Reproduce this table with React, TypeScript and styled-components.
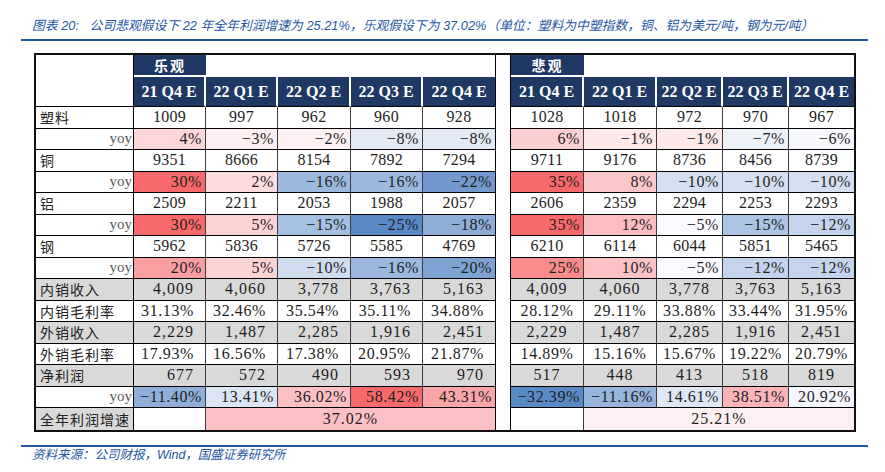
import React from "react";
import styled, {createGlobalStyle} from "styled-components";

const GlobalStyle = createGlobalStyle`
  body {
    margin: 0;
    background: #fff;
  }
`

const NAVY = '#203864'
const BLUE = '#2457a3'
const GRAY = '#d9d9d9'

type Kind = 'price' | 'yoy' | 'gray' | 'rate'
type Val = string | [string, string]

type RowType = {
  label: string,
  kind: Kind,
  left: Val[],
  right: Val[],
}

const rows: RowType[] = [
  {label: '塑料', kind: 'price', left: ['1009', '997', '962', '960', '928'], right: ['1028', '1018', '972', '970', '967']},
  {
    label: 'yoy', kind: 'yoy',
    left: [['4%', '#fcd6d8'], ['-3%', '#fdeff1'], ['-2%', '#fdf1f3'], ['-8%', '#e3eaf5'], ['-8%', '#e3eaf5']],
    right: [['6%', '#fbd0d2'], ['-1%', '#fde8ea'], ['-1%', '#fde8ea'], ['-7%', '#edf2f9'], ['-6%', '#f6f8fc']],
  },
  {label: '铜', kind: 'price', left: ['9351', '8666', '8154', '7892', '7294'], right: ['9711', '9176', '8736', '8456', '8739']},
  {
    label: 'yoy', kind: 'yoy',
    left: [['30%', '#f8696b'], ['2%', '#fcdcde'], ['-16%', '#9db8de'], ['-16%', '#9db8de'], ['-22%', '#7398cd']],
    right: [['35%', '#f8696b'], ['8%', '#fbc8ca'], ['-10%', '#d4e0f0'], ['-10%', '#d4e0f0'], ['-10%', '#d4e0f0']],
  },
  {label: '铝', kind: 'price', left: ['2509', '2211', '2053', '1988', '2057'], right: ['2606', '2359', '2294', '2253', '2293']},
  {
    label: 'yoy', kind: 'yoy',
    left: [['30%', '#f8696b'], ['5%', '#fcd3d5'], ['-15%', '#a6c0e2'], ['-25%', '#5a8ac6'], ['-18%', '#8dadd8']],
    right: [['35%', '#f8696b'], ['12%', '#fbbdbf'], ['-5%', '#fafbfe'], ['-15%', '#aec4e4'], ['-12%', '#c3d4ec']],
  },
  {label: '钢', kind: 'price', left: ['5962', '5836', '5726', '5585', '4769'], right: ['6210', '6114', '6044', '5851', '5465']},
  {
    label: 'yoy', kind: 'yoy',
    left: [['20%', '#f99fa1'], ['5%', '#fcd3d5'], ['-10%', '#d0ddef'], ['-16%', '#9db8de'], ['-20%', '#7ea2d2']],
    right: [['25%', '#f98b8d'], ['10%', '#fbc3c5'], ['-5%', '#fafbfe'], ['-12%', '#c3d4ec'], ['-12%', '#c3d4ec']],
  },
  {label: '内销收入', kind: 'gray', left: ['4,009', '4,060', '3,778', '3,763', '5,163'], right: ['4,009', '4,060', '3,778', '3,763', '5,163']},
  {label: '内销毛利率', kind: 'rate', left: ['31.13%', '32.46%', '35.54%', '35.11%', '34.88%'], right: ['28.12%', '29.11%', '33.88%', '33.44%', '31.95%']},
  {label: '外销收入', kind: 'gray', left: ['2,229', '1,487', '2,285', '1,916', '2,451'], right: ['2,229', '1,487', '2,285', '1,916', '2,451']},
  {label: '外销毛利率', kind: 'rate', left: ['17.93%', '16.56%', '17.38%', '20.95%', '21.87%'], right: ['14.89%', '15.16%', '15.67%', '19.22%', '20.79%']},
  {label: '净利润', kind: 'gray', left: ['677', '572', '490', '593', '970'], right: ['517', '448', '413', '518', '819']},
  {
    label: 'yoy', kind: 'yoy',
    left: [['-11.40%', '#8fafd9'], ['13.41%', '#dbe5f3'], ['36.02%', '#fbc0c2'], ['58.42%', '#f8696b'], ['43.31%', '#faa5a7']],
    right: [['-32.39%', '#5a8ac6'], ['-11.16%', '#97b4dc'], ['14.61%', '#dfe7f4'], ['38.51%', '#fbb5b8'], ['20.92%', '#f5f7fc']],
  },
]

const quarters = ['21 Q4 E', '22 Q1 E', '22 Q2 E', '22 Q3 E', '22 Q4 E']
const leftWidths = [72, 72, 73, 72, 72]
const rightWidths = [73, 73, 66, 66, 65]

const Page = styled.div`
  width: 847px;
  padding: 18px 0 0 21px;
`

const Caption = styled.div`
  height: 21px;
  padding-left: 11px;
  border-bottom: 2px solid ${BLUE};
  color: ${BLUE};
  font-family: "Liberation Sans", "Noto Sans CJK SC", sans-serif;
  font-style: italic;
  font-size: 12.8px;
  line-height: 16px;
  white-space: pre;
`

const Frame = styled.table`
  margin: 12px 0 0 13px;
  width: 822px;
  table-layout: fixed;
  border-collapse: separate;
  border-spacing: 0;
  border: 2px solid #111;
  font-family: "Liberation Serif", "Noto Sans CJK SC", serif;
  color: #1e1e1e;
`

const Row = styled.tr<{ $h: number }>`
  height: ${props => props.$h}px;
`

const Corner = styled.td`
  background: #fff;
  border-right: 1px solid #000;
  border-bottom: 1px solid #000;
`

const GroupHead = styled.td`
  background: ${NAVY};
  color: #fff;
  border-bottom: 2px solid #fff;
  text-align: center;
  font-family: "Noto Sans CJK SC", sans-serif;
  font-weight: 700;
  font-size: 14px;
  letter-spacing: 2px;
  padding: 0;
`

const Blank = styled.td`
  background: #fff;
  padding: 0;
`

const Gap = styled.td`
  background: #fff;
  border-left: 1px solid #000;
  border-right: 1px solid #000;
  padding: 0;
`

const QuarterHead = styled.td<{ $edge?: boolean }>`
  background: ${NAVY};
  color: #fff;
  border-right: ${props => props.$edge ? 'none' : '2px solid #fff'};
  border-bottom: 1px solid #000;
  text-align: center;
  font-weight: 700;
  font-size: 16px;
  padding: 0;
  white-space: nowrap;
`

const Label = styled.td<{ $gray: boolean, $yoy: boolean, $last?: boolean }>`
  background: ${props => props.$gray ? GRAY : '#fff'};
  border-right: 1px solid #000;
  border-bottom: ${props => props.$last ? 'none' : '1px solid #000'};
  padding: ${props => props.$yoy ? '0 1px 0 0' : '0 0 0 4px'};
  text-align: ${props => props.$yoy ? 'right' : 'left'};
  font-family: ${props => props.$yoy ? '"Liberation Serif", serif' : '"Noto Sans CJK SC", sans-serif'};
  font-size: ${props => props.$yoy ? '15px' : '14px'};
  letter-spacing: ${props => props.$yoy ? '0' : '1px'};
  color: ${props => props.$yoy ? '#595959' : '#222'};
  white-space: nowrap;
  overflow: hidden;
`

const Num = styled.td<{ $bg: string, $align: string, $pad: number, $edge?: boolean, $last?: boolean, $spacing: number }>`
  background: ${props => props.$bg};
  border-right: ${props => props.$edge ? 'none' : '1px solid #3c3c3c'};
  border-bottom: ${props => props.$last ? 'none' : '1px solid #000'};
  text-align: ${props => props.$align};
  padding: 0 ${props => props.$pad}px 0 0;
  font-size: 16px;
  letter-spacing: ${props => props.$spacing}px;
  white-space: nowrap;
  overflow: hidden;
`

const Footer = styled.div`
  margin-top: 13px;
  padding: 1px 0 0 11px;
  border-top: 2px solid ${BLUE};
  color: ${BLUE};
  font-family: "Liberation Sans", "Noto Sans CJK SC", sans-serif;
  font-style: italic;
  font-size: 12.5px;
  line-height: 15px;
`

const toCell = (v: Val, kind: Kind): [string, string] => {
  if (Array.isArray(v)) return [v[0].replace('-', '−'), v[1]]
  return [v, kind === 'gray' ? GRAY : '#fff']
}

const spacingFor = (kind: Kind) => {
  if (kind === 'price') return 0.3
  if (kind === 'gray') return 1
  return 0.6
}

const cellsFor = (r: RowType, side: 'left' | 'right') => {
  const vals = side === 'left' ? r.left : r.right
  return vals.map((v, i) => {
    const [text, bg] = toCell(v, r.kind)
    const edge = i === vals.length - 1
    let align = 'center'
    let pad = 0
    if (r.kind === 'yoy') {
      align = 'right'
      pad = 3
    } else if ((r.kind === 'gray' || r.kind === 'rate') && side === 'left') {
      align = 'right'
      pad = 11
    }
    return (
      <Num key={side + i} $bg={bg} $align={align} $pad={pad} $edge={edge} $spacing={spacingFor(r.kind)}>
        {text}
      </Num>
    )
  })
}

export default function App() {
  return (
    <Page>
      <GlobalStyle/>
      <Caption>
        {'图表 20:   公司悲观假设下 22 年全年利润增速为 25.21%，乐观假设下为 37.02%（单位：塑料为中塑指数，铜、铝为美元/吨，钢为元/吨）'}
      </Caption>

      <Frame>
        <colgroup>
          <col style={{width: 98}}/>
          {leftWidths.map((w, i) => <col key={'l' + i} style={{width: w}}/>)}
          <col style={{width: 16}}/>
          {rightWidths.map((w, i) => <col key={'r' + i} style={{width: w}}/>)}
        </colgroup>
        <tbody>
        <Row $h={21}>
          <Corner rowSpan={2}/>
          <GroupHead>乐观</GroupHead>
          <Blank colSpan={4}/>
          <Gap rowSpan={rows.length + 3}/>
          <GroupHead>悲观</GroupHead>
          <Blank colSpan={4}/>
        </Row>
        <Row $h={30}>
          {quarters.map((q, i) => <QuarterHead key={'lq' + i} $edge={i === 4}>{q}</QuarterHead>)}
          {quarters.map((q, i) => <QuarterHead key={'rq' + i} $edge={i === 4}>{q}</QuarterHead>)}
        </Row>
        {rows.map((r, idx) => (
          <Row $h={21.5} key={idx}>
            <Label $gray={r.kind === 'gray'} $yoy={r.kind === 'yoy'}>{r.label}</Label>
            {cellsFor(r, 'left')}
            {cellsFor(r, 'right')}
          </Row>
        ))}
        <Row $h={21.5}>
          <Label $gray={true} $yoy={false} $last>全年利润增速</Label>
          <Num $bg="#fff" $align="center" $pad={0} $spacing={1} $last/>
          <Num $bg="#fbc0c3" $align="center" $pad={0} $spacing={1} $last $edge colSpan={4}>37.02%</Num>
          <Num $bg="#fff" $align="center" $pad={0} $spacing={1} $last/>
          <Num $bg="#fdf0f2" $align="center" $pad={0} $spacing={1} $last $edge colSpan={4}>25.21%</Num>
        </Row>
        </tbody>
      </Frame>

      <Footer>资料来源：公司财报，Wind，国盛证券研究所</Footer>
    </Page>
  )
}
